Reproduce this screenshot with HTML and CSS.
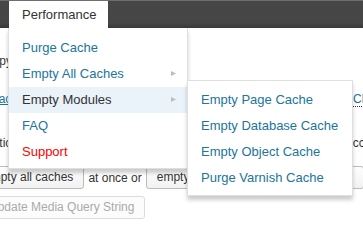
FILE: index.html
```html
<!DOCTYPE html>
<html lang="en">
<head>
<meta charset="utf-8">
<title>Performance menu</title>
<link rel="stylesheet" href="styles.css">
</head>
<body>
<header class="adminbar">
  <nav class="menupop">
    <div class="tab">Performance</div>
    <ul class="dropdown">
      <li class="item"><a class="link" href="#">Purge Cache</a></li>
      <li class="item has-sub"><a class="link" href="#">Empty All Caches</a><svg class="arrow" viewBox="0 0 5 5" width="5" height="5"><path d="M0 0L5 2.5L0 5Z"/></svg></li>
      <li class="item has-sub is-hover"><a class="link" href="#">Empty Modules</a><svg class="arrow" viewBox="0 0 5 5" width="5" height="5"><path d="M0 0L5 2.5L0 5Z"/></svg>
        <ul class="submenu">
          <li class="item"><a class="link" href="#">Empty Page Cache</a></li>
          <li class="item"><a class="link" href="#">Empty Database Cache</a></li>
          <li class="item"><a class="link" href="#">Empty Object Cache</a></li>
          <li class="item"><a class="link" href="#">Purge Varnish Cache</a></li>
        </ul>
      </li>
      <li class="item"><a class="link" href="#">FAQ</a></li>
      <li class="item"><a class="link support" href="#">Support</a></li>
    </ul>
  </nav>
</header>
<main class="page">
  <p class="line l1">Copy the settings.</p>
  <p class="line l2 cols-a"><span><a class="plain-link" href="#">Space</a></span><span><a class="abbr-link" href="#"><span class="abbr">Cloudflare</span></a></span></p>
  <p class="line l3 cols-b"><span>Critical</span><span>account</span></p>
  <div class="btnrow r1">
    <button class="button" type="button">empty all caches</button>
    <span class="btn-text">at once or</span>
    <button class="button" type="button">empty only the memcached cache(s)</button>
  </div>
  <div class="btnrow r2">
    <button class="button button-disabled" type="button">update Media Query String</button>
  </div>
</main>
</body>
</html>
```
FILE: styles.css
```css
html, body {
  margin: 0;
  padding: 0;
  overflow: hidden;
  background: #fff;
}

body {
  font-family: "Liberation Sans", Arial, sans-serif;
  color: #333;
}

/* ---------- admin bar ---------- */
.adminbar {
  position: relative;
  z-index: 10;
  box-sizing: border-box;
  height: 28px;
  border-top: 1px solid #6e6e6e;
  background: linear-gradient(#474747 0, #464646 22px, #383838 27px);
  display: flex;
}

.menupop {
  position: relative;
  margin-left: 9px;
}

.tab {
  height: 27px;
  padding: 0 12px 0 13px;
  background: #fff;
  color: #333;
  font-size: 13px;
  line-height: 27px;
  white-space: nowrap;
}

.dropdown,
.submenu {
  list-style: none;
  margin: 0;
  background: #fff;
  box-sizing: border-box;
  box-shadow: 0 4px 4px rgba(0, 0, 0, 0.2);
}

.dropdown {
  position: absolute;
  left: -1px;
  top: 27px;
  width: 180px;
  padding: 7px 0 3px;
  border: 1px solid #dfdfdf;
  border-top: 0;
}

.item {
  position: relative;
  display: flex;
  align-items: center;
  height: 26px;
  padding: 0 11px 0 13px;
  font-size: 13px;
  line-height: 26px;
  white-space: nowrap;
}

.link {
  color: #21759b;
  text-decoration: none;
}

.is-hover {
  background: #eaf2fa;
}

.is-hover > .link {
  color: #333;
}

.support {
  color: #f00;
}

.arrow {
  margin-left: auto;
  margin-bottom: 1px;
  fill: #bdbdbd;
}

.submenu {
  position: absolute;
  left: 178px;
  top: -7px;
  width: 166px;
  padding: 6px 0 4px;
  border: 1px solid #dfdfdf;
}

/* ---------- page behind the menu ---------- */
.page {
  display: flex;
  flex-direction: column;
  margin-left: -16px;
  padding-top: 24px;
  font-size: 12px;
  line-height: 18px;
  color: #333;
}

.line {
  margin: 0;
  white-space: nowrap;
}

.l2 { margin-top: 20px; }
.l3 { margin-top: 26px; }

.cols-a {
  display: grid;
  grid-template-columns: 369px auto;
}

.cols-b {
  display: grid;
  grid-template-columns: 362px auto;
}

.plain-link {
  color: #21759b;
  text-decoration: underline;
}

.abbr-link {
  color: #21759b;
  text-decoration: none;
}

.abbr {
  border-bottom: 1px dotted #333;
}

.btnrow {
  display: flex;
  align-items: center;
  gap: 4px;
  white-space: nowrap;
}

.r1 {
  margin-top: 14px;
  margin-left: -11px;
}

.r2 {
  margin-top: 7px;
  margin-left: -4px;
}

.btn-text {
  line-height: 18px;
}

.button {
  flex: none;
  box-sizing: border-box;
  height: 23px;
  margin: 0;
  padding: 0 10px 1px;
  border: 1px solid #bbb;
  border-radius: 3px;
  background: linear-gradient(#fefefe, #f2f2f2);
  color: #333;
  font-family: "Liberation Sans", Arial, sans-serif;
  font-size: 12px;
  line-height: 20px;
}

.button-disabled {
  color: #aaa;
  border-color: #dcdcdc;
  background: #fcfcfc;
}
```
